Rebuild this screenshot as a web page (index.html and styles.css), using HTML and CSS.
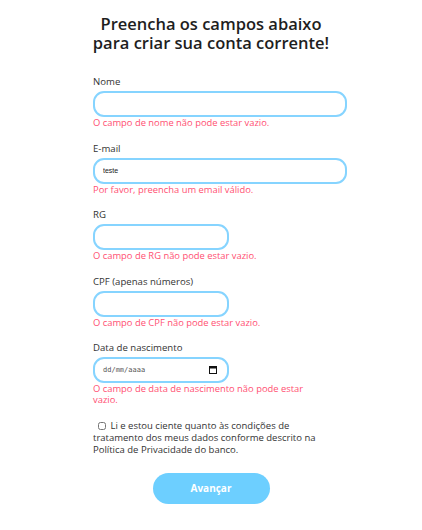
FILE: index.html
```html
<!DOCTYPE html>
<html lang="pt-BR">
<head>
<meta charset="utf-8">
<title>Cadastro</title>
<link rel="stylesheet" href="styles.css">
</head>
<body>
<h1 class="title">Preencha os campos abaixo<br>para criar sua conta corrente!</h1>
<form class="form">
  <div class="field">
    <label class="label">Nome</label>
    <input class="input" type="text">
    <p class="error">O campo de nome não pode estar vazio.</p>
  </div>
  <div class="field">
    <label class="label">E-mail</label>
    <input class="input" type="text" value="teste">
    <p class="error">Por favor, preencha um email válido.</p>
  </div>
  <div class="field field-short">
    <label class="label">RG</label>
    <input class="input" type="text">
    <p class="error">O campo de RG não pode estar vazio.</p>
  </div>
  <div class="field field-short">
    <label class="label">CPF (apenas números)</label>
    <input class="input" type="text">
    <p class="error">O campo de CPF não pode estar vazio.</p>
  </div>
  <div class="field field-short">
    <label class="label">Data de nascimento</label>
    <div class="input date">
      <span class="date-text">dd/mm/aaaa</span>
      <svg class="cal" width="8" height="8" viewBox="0 0 8 8"><rect x="0.5" y="0.5" width="7" height="7" fill="none" stroke="#111" stroke-width="1"/><rect x="0.5" y="0.5" width="7" height="2" fill="#111"/></svg>
    </div>
    <p class="error">O campo de data de nascimento não pode estar<br>vazio.</p>
  </div>
  <label class="terms"><input class="check" type="checkbox"> Li e estou ciente quanto às condições de tratamento dos meus dados conforme descrito na Política de Privacidade do banco.</label>
  <div class="actions"><button class="btn" type="button">Avançar</button></div>
</form>
</body>
</html>
```
FILE: styles.css
```css
html, body {
  margin: 0;
  padding: 0;
  background: #fff;
}
body {
  font-family: "Open Sans", "DejaVu Sans", sans-serif;
  color: #333;
}
.title {
  margin: 14px 0 0;
  text-align: center;
  font-size: 16.5px;
  line-height: 19px;
  font-weight: 600;
  color: #1e1e1e;
}
.form {
  width: 254px;
  margin: 24px 0 0 93px;
  display: flex;
  flex-direction: column;
}
.field {
  display: flex;
  flex-direction: column;
  margin-bottom: 14.5px;
}
.field-short {
  width: 200px;
}
.field-short .input {
  width: 136px;
}
.label {
  font-size: 9.6px;
  line-height: 12px;
  margin-bottom: 3px;
  color: #333;
}
.input {
  box-sizing: border-box;
  height: 26px;
  width: 254px;
  border: 2px solid #86d4ff;
  border-radius: 11px;
  padding: 0 8px;
  font-family: "Liberation Sans", sans-serif;
  font-size: 7px;
  color: #222;
  outline: none;
  background: #fff;
}
.date {
  display: flex;
  align-items: center;
  justify-content: space-between;
}
.date-text {
  font-family: "DejaVu Sans Mono", monospace;
  font-size: 7px;
  color: #555;
}
.cal {
  margin-right: 2px;
}
.error {
  margin: 0;
  font-size: 9.4px;
  line-height: 11px;
  color: #ff4f72;
  white-space: nowrap;
}
.terms {
  display: block;
  width: 236px;
  font-size: 9.5px;
  line-height: 12px;
  color: #333;
}
.check {
  width: 8px;
  height: 8px;
  margin: 0 2px 0 5px;
  vertical-align: -1px;
}
.actions {
  display: flex;
  justify-content: center;
  margin: 17px 0 0 -93px;
  width: 422px;
}
.btn {
  width: 117px;
  height: 31px;
  border: none;
  border-radius: 16px;
  background: #6dcfff;
  color: #fff;
  font-family: "Open Sans", sans-serif;
  font-weight: 700;
  font-size: 10px;
}
```
